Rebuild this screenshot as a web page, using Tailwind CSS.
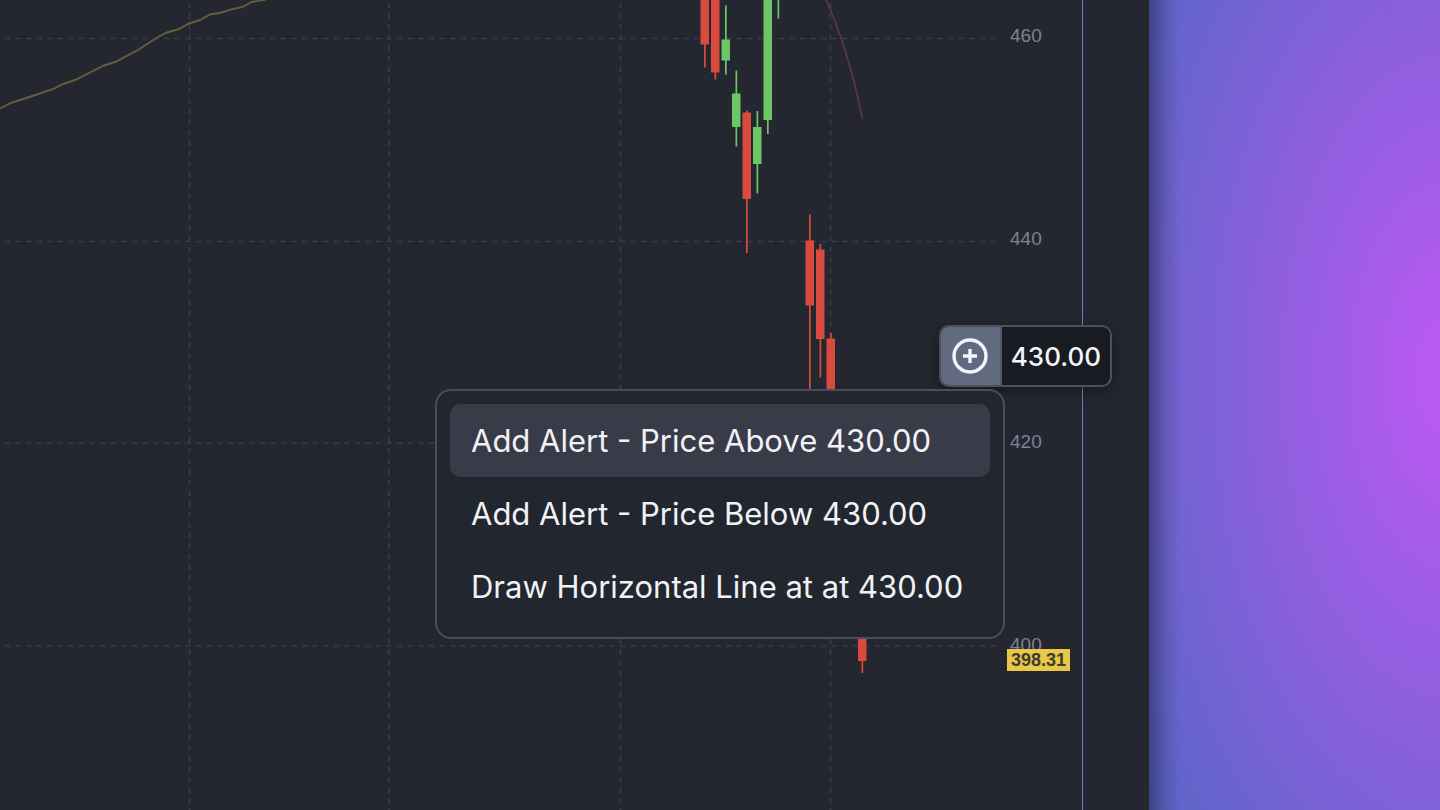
<!DOCTYPE html>
<html lang="en">
<head>
  <meta charset="UTF-8" />
  <meta name="viewport" content="width=device-width, initial-scale=1.0" />
  <title>Price Chart</title>
  <script src="https://cdn.jsdelivr.net/npm/@tailwindcss/browser@4"></script>
</head>
<body class="bg-[#24272f] font-['Inter',sans-serif]">
  <div class="flex min-h-screen overflow-hidden bg-[radial-gradient(390px_740px_at_calc(100%+10px)_375px,#be59f5,#5566c4)]">
    <main class="relative flex flex-1 bg-[#24272f]">

      <!-- plot area -->
      <div class="flex-1 min-w-0 overflow-hidden">
        <svg class="block w-[1000px] h-[810px]" viewBox="0 0 1000 810" role="img" aria-label="Candlestick chart">
          <g stroke="#3a3d46" stroke-width="1.6" stroke-dasharray="5.3 5.3" fill="none">
            <path d="M5 38.5H997M5 241.5H997M5 443H997M5 646H997" />
            <path d="M189.5 3V810M389 3V810M620.5 3V810M830.5 3V810" />
          </g>

          <!-- moving averages -->
          <path d="M0 108.500L11 103L31 96.500L53 89L63 84L75 80L104 65.500L115 62L137 50.500L158 37L167 32.500L179 29L189 23.500L200 20L210 14.500L222 12.500L231 9.500L242 7L252 2L266 -.5" fill="none" stroke="#655e3b" stroke-width="1.900" />
          <path d="M825 -3Q848 48 862.500 119" fill="none" stroke="#663063" stroke-width="1.500" />

          <!-- falling candles -->
          <g fill="#d94a3f">
            <path d="M700.500 0h8.500v44.500h-8.500zM711 0h8.500v72.500h-8.500zM742.500 112.500h8.500v86.500h-8.500zM805.500 240.500h8.500v65h-8.500zM816 249.500h8.500v89.500h-8.500zM826.500 338.500h8.500v61h-8.500zM858 620h8.500v41h-8.500z" />
            <path d="M704 44h1.700v23.500h-1.700zM714.500 72h1.700v7.500h-1.700zM746 110.500h1.700v142.500h-1.700zM809 214.500h1.700v185h-1.700zM819.500 244h1.700v133.500h-1.700zM830 333h1.700v20h-1.700zM861.500 660h1.700v13h-1.700z" />
          </g>

          <!-- rising candles -->
          <g fill="#6cc665">
            <path d="M721.500 39.500h8.500v21h-8.500zM732 93.500h8.500v33.500h-8.500zM753 127h8.500v37h-8.500zM763.500 0h8.500v120h-8.500z" />
            <path d="M725 5.500h1.700v69h-1.700zM735.500 70.500h1.700v76h-1.700zM756.500 111h1.700v82.500h-1.700zM767 119h1.700v15h-1.700zM777.500 0h1.700v18.500h-1.700z" />
          </g>
        </svg>
      </div>

      <!-- price axis -->
      <div class="relative w-[140px] shrink-0">
        <ol class="flex flex-col gap-[179px] pt-6 pl-px text-[19px] leading-6 text-[#7e8294] font-['Liberation_Sans',sans-serif]">
          <li>460</li>
          <li>440</li>
          <li>420</li>
          <li>400</li>
        </ol>
        <div class="absolute left-[-2px] top-[649px] h-[22px] bg-[#e8c749] px-1 text-[18px] leading-[22px] font-bold text-[#3f3b2c] font-['Liberation_Sans',sans-serif]">398.31</div>
        <div class="absolute inset-y-0 left-[73px] w-px bg-[#6386cf]"></div>
      </div>

      <!-- crosshair price -->
      <div class="absolute right-[37px] top-[325px] flex h-[62px] overflow-hidden rounded-[10px] border-2 border-[#4c4f5d] bg-[#191b22] shadow-[0_4px_16px_rgba(0,0,0,0.4)]">
        <button type="button" aria-label="Price actions" class="flex w-[61px] items-center justify-center border-r-2 border-[#535868] bg-[#626a80]">
          <svg class="size-9" viewBox="0 0 36 36" fill="none" stroke="#f4f5f9">
            <circle cx="18" cy="18" r="16" stroke-width="3.400" />
            <path d="M18 11v14M11 18h14" stroke-width="3.400" />
          </svg>
        </button>
        <span class="flex items-center px-[9px] text-[26px] font-medium text-[#f4f5f9]">430.00</span>
      </div>

      <!-- context menu -->
      <div role="menu" class="absolute right-36 top-[389px] w-[570px] rounded-2xl border-2 border-[#4a4d5b] bg-[#22262e] p-[13px] pb-[14px] text-[31px] leading-[73px] text-[#f1f2f6]">
        <button type="button" role="menuitem" class="block w-full rounded-[10px] bg-[#393c48] px-[21px] text-left whitespace-nowrap">Add Alert - Price Above 430.00</button>
        <button type="button" role="menuitem" class="block w-full rounded-[10px] px-[21px] text-left whitespace-nowrap">Add Alert - Price Below 430.00</button>
        <button type="button" role="menuitem" class="block w-full rounded-[10px] px-[21px] text-left whitespace-nowrap">Draw Horizontal Line at at 430.00</button>
      </div>
    </main>
    <aside class="w-[291px] shrink-0 bg-[linear-gradient(to_right,rgba(30,32,60,0.5),rgba(30,32,60,0.2)_14px,transparent_30px)]"></aside>
  </div>
</body>
</html>
